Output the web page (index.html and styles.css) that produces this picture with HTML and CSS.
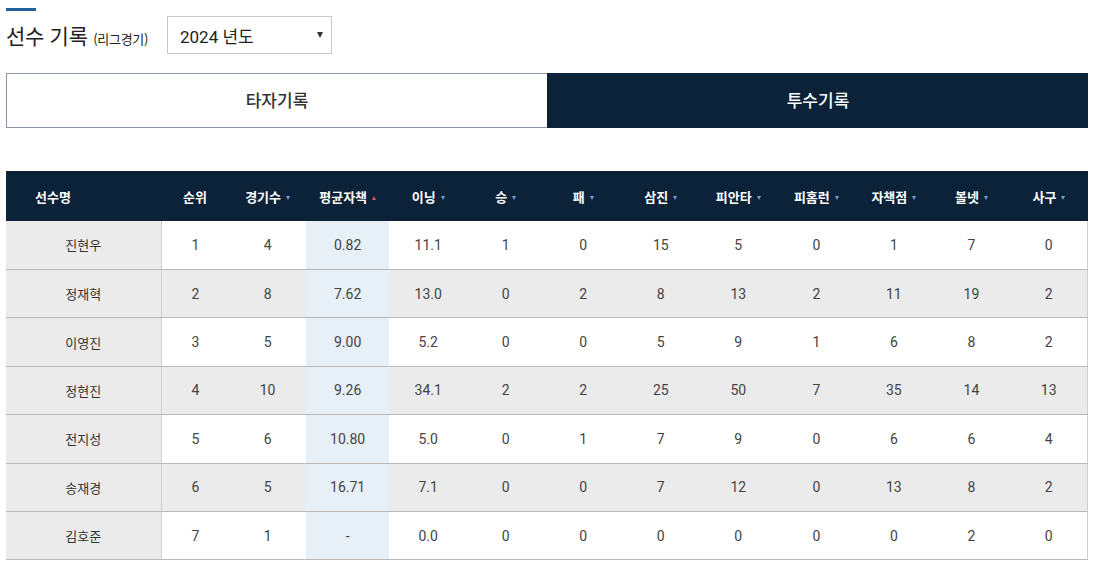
FILE: index.html
```html
<!DOCTYPE html>
<html lang="ko">
<head>
<meta charset="utf-8">
<link rel="stylesheet" href="styles.css">
</head>
<body>
<div class="wrap">
  <div class="accent"></div>
  <div class="title-row">
    <h2 class="title">선수 기록 <span class="sub">(리그경기)</span></h2>
    <div class="select"><span>2024 년도</span><i class="caret"></i></div>
  </div>
  <div class="tabs">
    <div class="tab">타자기록</div>
    <div class="tab active">투수기록</div>
  </div>
  <table class="stats">
    <colgroup>
      <col style="width:155px"><col style="width:68px"><col style="width:77px"><col style="width:83px">
      <col style="width:78px"><col style="width:77px"><col style="width:78px"><col style="width:77px">
      <col style="width:78px"><col style="width:78px"><col style="width:77px"><col style="width:78px"><col style="width:77px">
    </colgroup>
    <thead>
      <tr>
        <th class="name-h">선수명</th>
        <th>순위</th>
        <th>경기수<i class="dn"></i></th>
        <th>평균자책<i class="up"></i></th>
        <th>이닝<i class="dn"></i></th>
        <th>승<i class="dn"></i></th>
        <th>패<i class="dn"></i></th>
        <th>삼진<i class="dn"></i></th>
        <th>피안타<i class="dn"></i></th>
        <th>피홈런<i class="dn"></i></th>
        <th>자책점<i class="dn"></i></th>
        <th>볼넷<i class="dn"></i></th>
        <th>사구<i class="dn"></i></th>
      </tr>
    </thead>
    <tbody>
      <tr><td class="nm">진현우</td><td>1</td><td>4</td><td class="hl">0.82</td><td>11.1</td><td>1</td><td>0</td><td>15</td><td>5</td><td>0</td><td>1</td><td>7</td><td>0</td></tr>
      <tr class="alt"><td class="nm">정재혁</td><td>2</td><td>8</td><td class="hl">7.62</td><td>13.0</td><td>0</td><td>2</td><td>8</td><td>13</td><td>2</td><td>11</td><td>19</td><td>2</td></tr>
      <tr><td class="nm">이영진</td><td>3</td><td>5</td><td class="hl">9.00</td><td>5.2</td><td>0</td><td>0</td><td>5</td><td>9</td><td>1</td><td>6</td><td>8</td><td>2</td></tr>
      <tr class="alt"><td class="nm">정현진</td><td>4</td><td>10</td><td class="hl">9.26</td><td>34.1</td><td>2</td><td>2</td><td>25</td><td>50</td><td>7</td><td>35</td><td>14</td><td>13</td></tr>
      <tr><td class="nm">전지성</td><td>5</td><td>6</td><td class="hl">10.80</td><td>5.0</td><td>0</td><td>1</td><td>7</td><td>9</td><td>0</td><td>6</td><td>6</td><td>4</td></tr>
      <tr class="alt"><td class="nm">송재경</td><td>6</td><td>5</td><td class="hl">16.71</td><td>7.1</td><td>0</td><td>0</td><td>7</td><td>12</td><td>0</td><td>13</td><td>8</td><td>2</td></tr>
      <tr><td class="nm">김호준</td><td>7</td><td>1</td><td class="hl">-</td><td>0.0</td><td>0</td><td>0</td><td>0</td><td>0</td><td>0</td><td>0</td><td>2</td><td>0</td></tr>
    </tbody>
  </table>
</div>
</body>
</html>
```

FILE: styles.css
```css
* { box-sizing: border-box; }
html, body { margin: 0; padding: 0; background: #fff; }
body {
  font-family: Roboto, "Noto Sans CJK KR", "Noto Sans", sans-serif;
  color: #333;
}
.wrap { width: 1082px; margin-left: 6px; padding-top: 8px; }
.accent { width: 30px; height: 3px; background: #25609a; }
.title-row { display: flex; align-items: center; margin-top: 5px; height: 38px; }
.title {
  margin: 0;
  font-family: "Noto Sans CJK KR", sans-serif;
  font-weight: 400;
  font-size: 21px;
  color: #222;
  letter-spacing: -0.3px;
  width: 161px;
}
.title .sub { font-size: 13px; font-weight: 400; letter-spacing: -0.3px; }
.select {
  width: 165px; height: 38px;
  border: 1px solid #c8c8c8;
  display: flex; align-items: center; justify-content: space-between;
  padding: 0 8px 0 12px;
  font-family: Roboto, "Noto Sans CJK KR", sans-serif;
  font-size: 17px; color: #222;
}
.select .caret {
  width: 0; height: 0;
  border-left: 3px solid transparent;
  border-right: 3px solid transparent;
  border-top: 6px solid #333;
}
.tabs { display: flex; margin-top: 19px; height: 55px; }
.tab {
  flex: 1;
  display: flex; align-items: center; justify-content: center;
  font-family: "Noto Sans CJK KR", sans-serif;
  font-size: 17px; font-weight: 500; color: #333;
  border: 1px solid #8796a8;
  border-right: none;
  padding-bottom: 3px;
}
.tab.active { background: #0b2239; color: #fff; border-color: #0b2239; }
.stats {
  margin-top: 43px;
  width: 1082px;
  border-collapse: collapse;
  table-layout: fixed;
}
.stats th {
  background: #0b2239;
  color: #fff;
  font-family: "Noto Sans CJK KR", sans-serif;
  font-size: 13px;
  font-weight: 700;
  height: 50px;
  padding: 0;
  text-align: center;
  white-space: nowrap;
}
.stats th.name-h { text-align: left; padding-left: 29px; }
.stats th i {
  display: inline-block;
  width: 0; height: 0;
  margin-left: 5px;
  vertical-align: middle;
  border-left: 2.5px solid transparent;
  border-right: 2.5px solid transparent;
}
.stats th i.dn { border-top: 4px solid #6e9fd8; }
.stats th i.up { border-bottom: 4px solid #d9545e; }
.stats td {
  height: 48.43px;
  padding: 0;
  text-align: center;
  font-size: 14px;
  color: #444;
  border-bottom: 1px solid #b9b9b9;
  background: #fff;
}
.stats tr.alt td { background: #ebebeb; }
.stats td.nm {
  background: #ebebeb;
  border-right: 1px solid #cfcfcf;
  font-family: "Noto Sans CJK KR", sans-serif;
  font-size: 13px;
  color: #333;
}
.stats td.hl, .stats tr.alt td.hl { background: #e7eff7; }
.stats td:last-child { border-right: 1px solid #cfcfcf; }
```
